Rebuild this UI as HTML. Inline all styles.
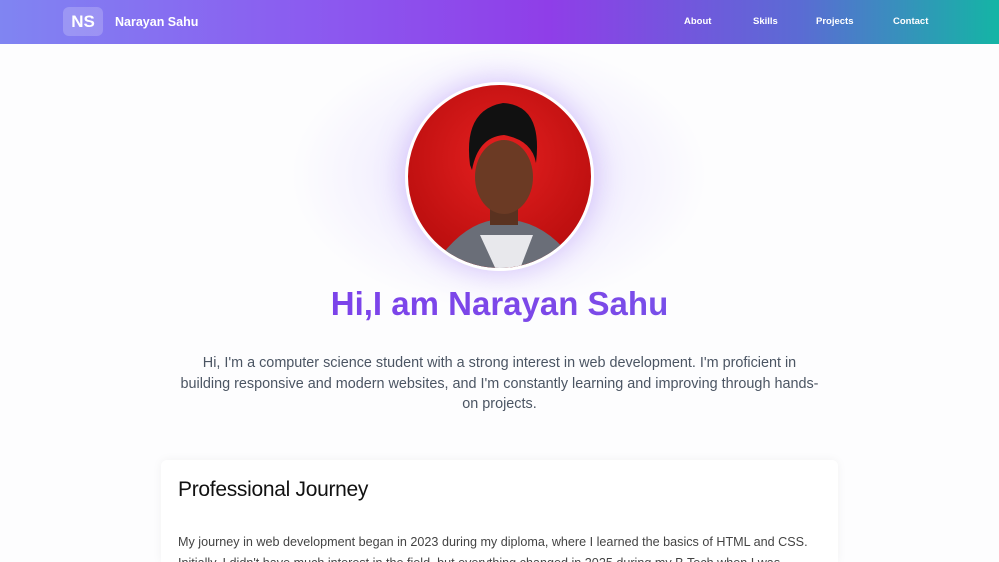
<!DOCTYPE html>
<html><head><meta charset="utf-8"><style>
*{margin:0;padding:0;box-sizing:border-box}
html,body{width:999px;height:562px;overflow:hidden}
body{background:#fdfdfe;font-family:"Liberation Sans",sans-serif;position:relative}
.nav{position:absolute;top:0;left:0;width:999px;height:44px;background:linear-gradient(90deg,#8085f2 0%,#8b5cf0 30%,#8f3ee8 55%,#5b6bd4 80%,#14b5a5 100%)}
.logo{position:absolute;left:63px;top:7px;width:40px;height:29px;border-radius:6px;background:rgba(255,255,255,.2);color:#fff;font-weight:bold;font-size:17px;text-align:center;line-height:29px}
.name{position:absolute;left:115px;top:15px;color:#fff;font-weight:bold;font-size:12.5px}
.links a{position:absolute;top:16px;color:#fff;font-size:9.5px;font-weight:bold;text-decoration:none}
.glow{position:absolute;left:289px;top:40px;width:420px;height:270px;border-radius:50%;background:radial-gradient(ellipse,rgba(167,139,250,.25),rgba(255,255,255,0) 70%)}
.photo{position:absolute;left:405px;top:82px;width:189px;height:189px;border-radius:50%;border:3px solid #fff;box-shadow:0 0 30px rgba(139,92,246,.35);overflow:hidden;background:radial-gradient(circle at 50% 40%,#e52020,#b80d0d 80%)}
h1{position:absolute;top:285px;left:0;width:999px;text-align:center;font-size:33px;font-weight:bold;color:#7c3aed;background:linear-gradient(90deg,#7c3aed,#7c4ae8 60%,#6366f1);-webkit-background-clip:text;background-clip:text;-webkit-text-fill-color:transparent}
.intro{position:absolute;top:353px;left:0;width:999px;text-align:center;font-size:14.4px;line-height:20.5px;color:#4b5563;white-space:nowrap}
.card{position:absolute;left:161px;top:460px;width:677px;height:102px;overflow:hidden;background:#fff;border-radius:6px 6px 0 0;box-shadow:0 0 10px rgba(0,0,0,.05)}
.card h2{position:absolute;left:17px;top:18px;font-size:21px;font-weight:normal;color:#111;letter-spacing:-0.3px}
.card p{position:absolute;left:17px;top:72px;width:650px;font-size:12.6px;line-height:21px;color:#444}
</style></head><body>
<div class="nav"><div class="logo">NS</div><div class="name">Narayan Sahu</div>
<div class="links"><a style="left:684px">About</a><a style="left:753px">Skills</a><a style="left:816px">Projects</a><a style="left:893px">Contact</a></div></div>
<div class="glow"></div>
<div class="photo"><svg width="189" height="189" viewBox="0 0 189 189">
<path d="M30 175 Q55 140 85 135 L105 135 Q140 140 165 175 L165 189 L25 189Z" fill="#6a6e78"/>
<path d="M72 150 L90 189 L110 189 L125 150 Z" fill="#e8e8ec"/>
<rect x="82" y="110" width="28" height="30" fill="#5a3220"/>
<ellipse cx="96" cy="92" rx="29" ry="37" fill="#6b3a24"/>
<path d="M62 80 Q55 25 95 18 Q135 20 128 78 Q124 55 96 50 Q70 52 64 85Z" fill="#111"/>
</svg></div>
<h1>Hi,I am Narayan Sahu</h1>
<div class="intro">Hi, I'm a computer science student with a strong interest in web development. I'm proficient in<br>building responsive and modern websites, and I'm constantly learning and improving through hands-<br>on projects.</div>
<div class="card"><h2>Professional Journey</h2>
<p>My journey in web development began in 2023 during my diploma, where I learned the basics of HTML and CSS. Initially, I didn't have much interest in the field, but everything changed in 2025 during my B.Tech when I was</p></div>
</body></html>
